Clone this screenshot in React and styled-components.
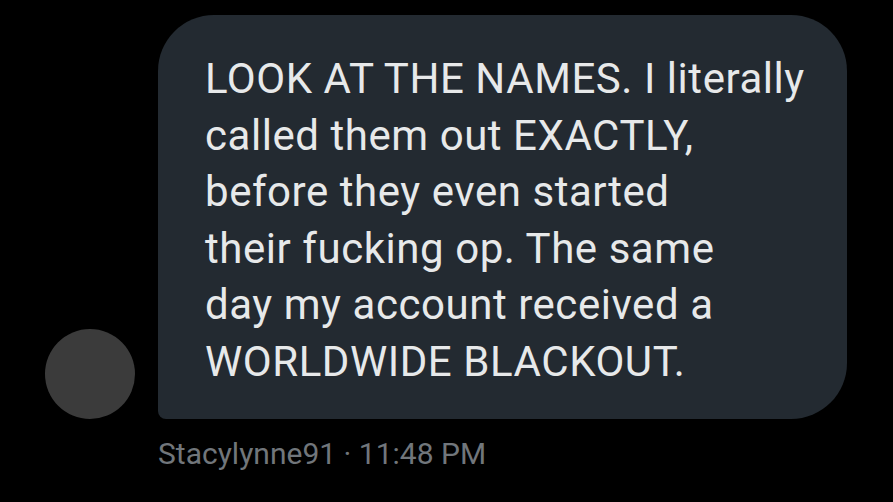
import * as React from 'react';
import styled, { createGlobalStyle } from 'styled-components';

const Global = createGlobalStyle`
  html, body {
    margin: 0;
    padding: 0;
    background: #000;
  }
  body {
    width: 893px;
    height: 502px;
    overflow: hidden;
    font-family: Roboto, "Liberation Sans", Arial, sans-serif;
  }
`;

const Page = styled.div`
  padding: 15px 0 0 45px;
`;

const Row = styled.div`
  display: flex;
  align-items: flex-end;
  gap: 23px;
`;

const Avatar = styled.div`
  width: 90px;
  height: 90px;
  border-radius: 50%;
  background: #3b3b3b;
  flex-shrink: 0;
`;

const Bubble = styled.div`
  width: 689px;
  height: 404px;
  box-sizing: border-box;
  background: #232a31;
  border-radius: 56px 56px 56px 8px;
  padding: 36px 30px 0 47px;
`;

const Text = styled.div`
  color: #e7e9ea;
  font-size: 42px;
  line-height: 56.5px;
  letter-spacing: 0.55px;
`;

const Line = styled.div`
  white-space: nowrap;
`;

const Meta = styled.div`
  margin: 17px 0 0 113px;
  color: #71767b;
  font-size: 30px;
  line-height: 36px;
`;

const lines = [
  'LOOK AT THE NAMES. I literally',
  'called them out EXACTLY,',
  'before they even started',
  'their fucking op. The same',
  'day my account received a',
  'WORLDWIDE BLACKOUT.',
];

export default function App() {
  return (
    <Page>
      <Global />
      <Row>
        <Avatar />
        <Bubble>
          <Text>
            {lines.map((l) => (
              <Line key={l}>{l}</Line>
            ))}
          </Text>
        </Bubble>
      </Row>
      <Meta>Stacylynne91 · 11:48 PM</Meta>
    </Page>
  );
}
